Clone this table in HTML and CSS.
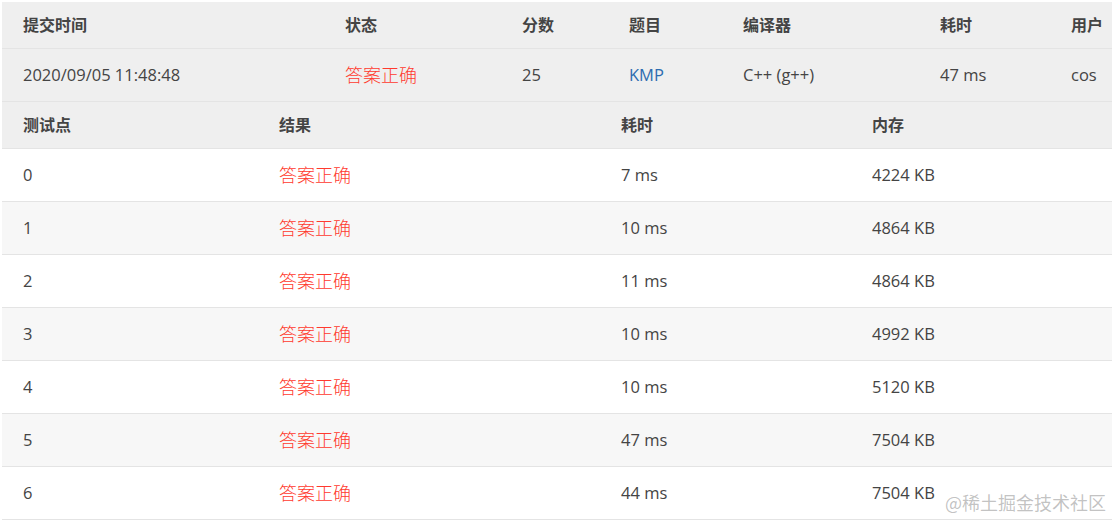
FILE: index.html
```html
<!DOCTYPE html>
<html lang="zh-CN">
<head>
<meta charset="utf-8">
<link rel="stylesheet" href="styles.css">
</head>
<body>
<div class="page">
  <table class="tbl summary">
    <colgroup>
      <col style="width:322px"><col style="width:177px"><col style="width:107px"><col style="width:114px"><col style="width:197px"><col style="width:131px"><col>
    </colgroup>
    <thead>
      <tr><th>提交时间</th><th>状态</th><th>分数</th><th>题目</th><th>编译器</th><th>耗时</th><th>用户</th></tr>
    </thead>
    <tbody>
      <tr class="gray"><td>2020/09/05 11:48:48</td><td class="ok">答案正确</td><td>25</td><td><a class="link">KMP</a></td><td>C++ (g++)</td><td>47 ms</td><td>cos</td></tr>
    </tbody>
  </table>
  <table class="tbl cases">
    <colgroup>
      <col style="width:256px"><col style="width:342px"><col style="width:251px"><col>
    </colgroup>
    <thead>
      <tr><th>测试点</th><th>结果</th><th>耗时</th><th>内存</th></tr>
    </thead>
    <tbody>
      <tr><td>0</td><td class="ok">答案正确</td><td>7 ms</td><td>4224 KB</td></tr>
      <tr class="alt"><td>1</td><td class="ok">答案正确</td><td>10 ms</td><td>4864 KB</td></tr>
      <tr><td>2</td><td class="ok">答案正确</td><td>11 ms</td><td>4864 KB</td></tr>
      <tr class="alt"><td>3</td><td class="ok">答案正确</td><td>10 ms</td><td>4992 KB</td></tr>
      <tr><td>4</td><td class="ok">答案正确</td><td>10 ms</td><td>5120 KB</td></tr>
      <tr class="alt"><td>5</td><td class="ok">答案正确</td><td>47 ms</td><td>7504 KB</td></tr>
      <tr><td>6</td><td class="ok">答案正确</td><td>44 ms</td><td>7504 KB</td></tr>
    </tbody>
  </table>
  <div class="watermark">@稀土掘金技术社区</div>
</div>
</body>
</html>
```
FILE: styles.css
```css
html, body {
  margin: 0;
  padding: 0;
  background: #ffffff;
}
body {
  font-family: "Open Sans", "Noto Sans CJK SC", sans-serif;
  color: #444;
  font-size: 16.5px;
}
.page {
  position: relative;
  padding: 2px 0 0 2px;
  width: 1110px;
  height: 519px;
}
.tbl {
  width: 1110px;
  border-collapse: collapse;
  table-layout: fixed;
}
.tbl th {
  background: #efefef;
  text-align: left;
  font-family: "Noto Sans CJK SC", sans-serif;
  font-weight: 700;
  font-size: 16px;
  color: #444;
  padding: 0 0 2px 21px;
  border-bottom: 1px solid #e4e4e4;
  white-space: nowrap;
}
.summary th { height: 44px; }
.cases th { height: 44px; }
.tbl td {
  height: 50px;
  padding: 0 0 2px 21px;
  border-bottom: 1px solid #e4e4e4;
  white-space: nowrap;
  background: #ffffff;
}
.tbl tr.gray td { background: #efefef; }
.tbl tr.alt td { background: #f7f7f7; }
.ok {
  color: #ff3a2e;
  font-family: "Noto Sans CJK SC", sans-serif;
  font-size: 18px;
  font-weight: 300;
}
.link {
  color: #2d6cb0;
  text-decoration: none;
}
.watermark {
  position: absolute;
  right: 6px;
  bottom: 6px;
  font-family: "Noto Sans CJK SC", sans-serif;
  font-size: 18px;
  color: rgba(120, 120, 120, 0.45);
  white-space: nowrap;
}
```
